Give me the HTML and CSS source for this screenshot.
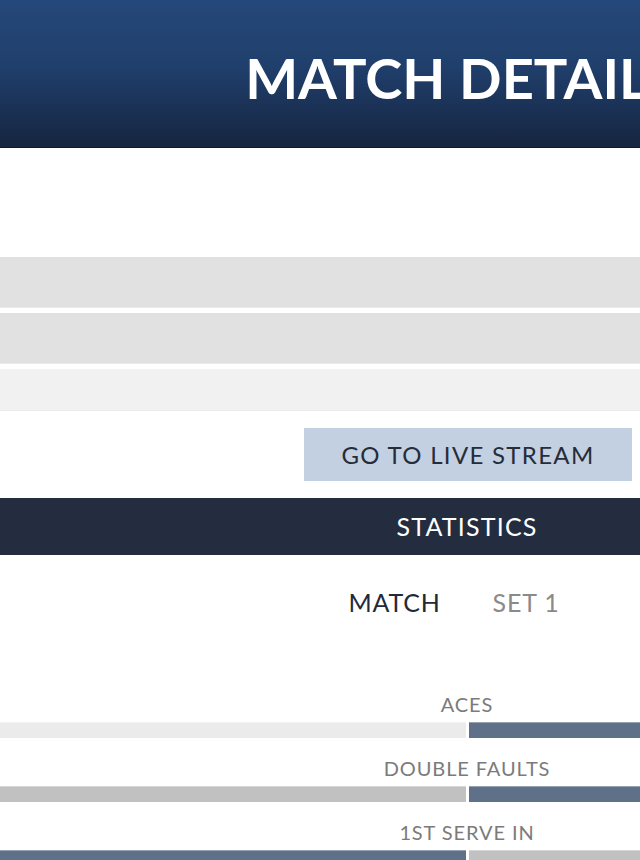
FILE: index.html
```html
<!DOCTYPE html>
<html lang="en">
<head>
    <meta charset="UTF-8">
    <meta name="viewport" content="width=device-width, initial-scale=1.0">
    <title>Match Details</title>
    <link rel="stylesheet" href="styles.css">
</head>
<body>

    <div class="page">
        <header class="header">
            <h1>MATCH DETAILS</h1>
        </header>

        <div class="info">
            <div class="info-row"></div>
            <div class="info-row"></div>
            <div class="info-row light"></div>
        </div>

        <div class="actions">
            <button class="stream-btn">GO TO LIVE STREAM</button>
        </div>

        <div class="section-title">STATISTICS</div>

        <div class="tabs">
            <span class="tab active">MATCH</span>
            <span class="tab">SET 1</span>
        </div>

        <div class="stats">
            <div class="stat">
                <div class="stat-label">ACES</div>
                <div class="stat-bar">
                    <div class="half pale"></div>
                    <div class="half blue"></div>
                </div>
            </div>
            <div class="stat">
                <div class="stat-label">DOUBLE FAULTS</div>
                <div class="stat-bar">
                    <div class="half grey"></div>
                    <div class="half blue"></div>
                </div>
            </div>
            <div class="stat">
                <div class="stat-label">1ST SERVE IN</div>
                <div class="stat-bar">
                    <div class="half blue"></div>
                    <div class="half grey"></div>
                </div>
            </div>
        </div>
    </div>

</body>
</html>
```

FILE: styles.css
```css
body {
    margin: 0;
    padding: 0;
    width: 640px;
    overflow: hidden;
    background-color: #fff;
    font-family: Lato, "Open Sans", sans-serif;
}
.page {
    width: 934px;
}
.header {
    height: 148px;
    display: flex;
    align-items: center;
    justify-content: center;
    padding: 8px 10px 0 0;
    box-sizing: border-box;
    background: linear-gradient(to bottom, #25487a 0%, #203f6c 45%, #162540 100%);
    border-bottom: 1px solid #0e1829;
}
.header h1 {
    margin: 0;
    font-size: 56px;
    font-weight: 700;
    color: #fff;
    letter-spacing: 0;
    white-space: nowrap;
}
.info {
    margin-top: 109px;
    display: flex;
    flex-direction: column;
    gap: 5px;
}
.info-row {
    height: 50px;
    background-color: #e1e1e1;
    border-bottom: 1px solid #ebebeb;
}
.info-row.light {
    height: 41px;
    background-color: #f1f1f1;
}
.actions {
    padding-top: 17px;
    display: flex;
    justify-content: center;
}
.stream-btn {
    width: 328px;
    height: 53px;
    margin-left: 2px;
    padding: 0;
    background-color: #c2d0e2;
    border: none;
    color: #262c38;
    font-family: Lato, "Open Sans", sans-serif;
    font-size: 24px;
    letter-spacing: 1.3px;
}
.section-title {
    margin-top: 17px;
    height: 57px;
    line-height: 57px;
    text-align: center;
    background-color: #232d3f;
    color: #fff;
    font-size: 25px;
    letter-spacing: 1.2px;
}
.tabs {
    display: flex;
    justify-content: center;
    gap: 52px;
    padding: 30px 26px 0 0;
    line-height: 34px;
    font-size: 25px;
    letter-spacing: 0.8px;
}
.tab {
    color: #8a8a8a;
}
.tab.active {
    color: #222a38;
}
.stats {
    margin-top: 73px;
}
.stat-label {
    text-align: center;
    line-height: 24px;
    font-size: 20px;
    letter-spacing: 0.9px;
    color: #7b7b7b;
}
.stat-bar {
    display: flex;
    gap: 3px;
    height: 16px;
    margin: 6px 0 18px;
}
.half {
    flex: 1;
    border-top: 1px solid rgba(255, 255, 255, 0.35);
}
.half.pale {
    background-color: #ebebeb;
}
.half.grey {
    background-color: #c1c1c1;
}
.half.blue {
    background-color: #5f7089;
}
```
